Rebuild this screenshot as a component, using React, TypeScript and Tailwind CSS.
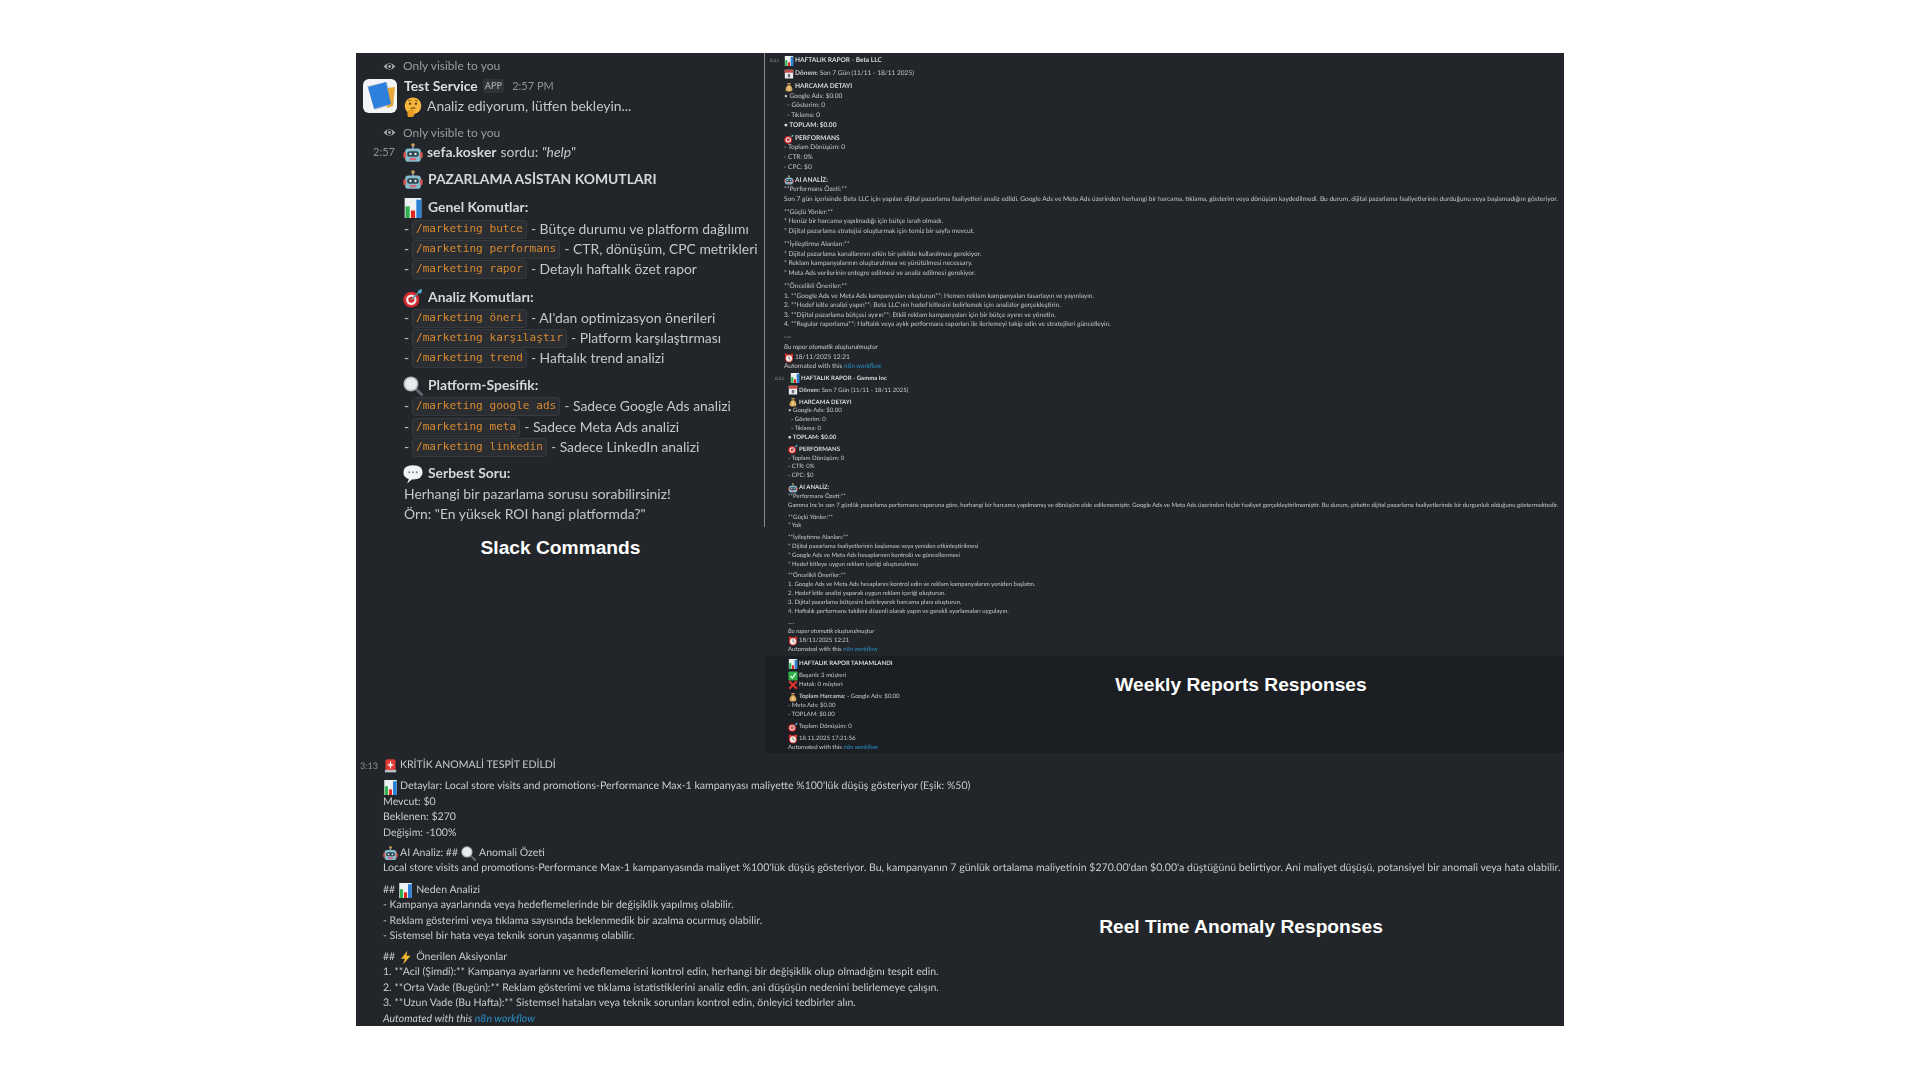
import React from "react";

type EmojiName = "chart" | "think" | "robot" | "target" | "mag" | "bubble" | "cal" | "bag" | "clock" | "check" | "cross" | "siren" | "bolt";

function Emoji({ name, className }: { name: EmojiName; className: string }) {
  const body: Record<EmojiName, React.ReactNode> = {
    chart: (
      <>
        <rect x="2" y="0" width="20" height="24" fill="#eef1f4" />
        <rect x="3" y="10" width="5" height="14" fill="#2fb24c" />
        <rect x="9.5" y="15" width="5" height="9" fill="#e0281f" />
        <rect x="16" y="2" width="6" height="22" fill="#2a7fd5" />
      </>
    ),
    think: (
      <>
        <circle cx="12" cy="10.5" r="10" fill="#f6b73c" />
        <circle cx="8.5" cy="8" r="1.4" fill="#5b3a10" />
        <circle cx="15.5" cy="8" r="1.4" fill="#5b3a10" />
        <path d="M6 4.5 L10 3.8 M14 3.6 L18 5" stroke="#8a5a14" strokeWidth="1.1" fill="none" />
        <path d="M9 14 Q12 12.5 15 13.5" stroke="#7a4d10" strokeWidth="1.3" fill="none" />
        <path d="M6 24 Q4 18 7 16 L12 15 L14 17 L11 18.5 L14 20 Q13 24 10 24 Z" fill="#e99a20" />
      </>
    ),
    robot: (
      <>
        <circle cx="12" cy="2.5" r="2.2" fill="#d9a04c" />
        <rect x="11" y="3" width="2" height="4" fill="#8b9aa5" />
        <rect x="2.5" y="6.5" width="19" height="16" rx="4" fill="#86bccb" />
        <rect x="0.5" y="11" width="3" height="7" rx="1" fill="#d9534f" />
        <rect x="20.5" y="11" width="3" height="7" rx="1" fill="#d9534f" />
        <rect x="5" y="10" width="14" height="6.5" rx="3" fill="#2f4650" />
        <circle cx="9" cy="13.2" r="1.4" fill="#e6f1f5" />
        <circle cx="15" cy="13.2" r="1.4" fill="#e6f1f5" />
        <rect x="8" y="18" width="8" height="2.6" rx="1" fill="#d9667a" />
      </>
    ),
    target: (
      <>
        <circle cx="10" cy="14" r="9.5" fill="#d32a2f" />
        <circle cx="10" cy="14" r="6.3" fill="#f3e9e6" />
        <circle cx="10" cy="14" r="3.6" fill="#d32a2f" />
        <path d="M10 14 L20 4" stroke="#5f8f9f" strokeWidth="1.8" />
        <path d="M18 3 L23 1 L22 6 L19 7 Z" fill="#4fb1c9" />
      </>
    ),
    mag: (
      <>
        <path d="M14 14 L22.5 22.5" stroke="#5f646a" strokeWidth="3.6" strokeLinecap="round" />
        <circle cx="9.5" cy="9.5" r="9" fill="#aeb5bb" />
        <circle cx="9.5" cy="9.5" r="7.2" fill="#e9ecee" />
      </>
    ),
    bubble: (
      <>
        <path d="M5 23.5 L7 18 Q0.5 16 0.5 10 Q0.5 1.5 12 1.5 Q23.5 1.5 23.5 10 Q23.5 18.5 12 18.5 L10.5 18.5 Z" fill="#f1f3f4" />
        <circle cx="7.5" cy="10" r="1.2" fill="#7c8388" />
        <circle cx="12" cy="10" r="1.2" fill="#7c8388" />
        <circle cx="16.5" cy="10" r="1.2" fill="#7c8388" />
      </>
    ),
    cal: (
      <>
        <rect x="2" y="2" width="20" height="21" rx="1" fill="#eceff1" />
        <rect x="2" y="2" width="20" height="7" fill="#c94f4a" />
        <rect x="9" y="12" width="6" height="8" fill="#6c7378" />
      </>
    ),
    bag: (
      <>
        <path d="M9 6 L7.5 2.5 L16.5 2.5 L15 6 Z" fill="#c79a55" />
        <rect x="8.5" y="6" width="7" height="2" fill="#8c6a32" />
        <path d="M9 8 Q3 13 3.5 18 Q4 23 12 23 Q20 23 20.5 18 Q21 13 15 8 Z" fill="#d8a95c" />
        <rect x="10.6" y="11.5" width="2.8" height="8" fill="#f7e3a8" />
      </>
    ),
    clock: (
      <>
        <circle cx="5" cy="4.5" r="3.5" fill="#d8322f" />
        <circle cx="19" cy="4.5" r="3.5" fill="#d8322f" />
        <circle cx="12" cy="13" r="10" fill="#d8322f" />
        <circle cx="12" cy="13" r="7.4" fill="#f4efe9" />
        <path d="M12 8 V13 L15.5 15" stroke="#33373b" strokeWidth="1.6" fill="none" />
      </>
    ),
    check: (
      <>
        <rect x="1" y="1" width="22" height="22" rx="2" fill="#2fb04a" />
        <path d="M6 12 L10.5 17 L18.5 5.5" stroke="#f4fff4" strokeWidth="3" fill="none" />
      </>
    ),
    cross: <path d="M3 3 L21 21 M21 3 L3 21" stroke="#e3342b" strokeWidth="5" />,
    siren: (
      <>
        <rect x="4" y="2" width="16" height="19" rx="3" fill="#e23b36" />
        <rect x="3" y="19" width="18" height="4" fill="#b9c0c6" />
        <path d="M12 4 L13.5 9.5 L18 11 L13.5 12.5 L12 18 L10.5 12.5 L6 11 L10.5 9.5 Z" fill="#fff" />
      </>
    ),
    bolt: <path d="M15 1 L5 14 L11 14 L8 23 L20 9 L13.5 9 Z" fill="#f5b82e" />,
  };
  return (
    <svg viewBox="0 0 24 24" className={`shrink-0 ${className}`}>
      {body[name]}
    </svg>
  );
}

function Eye() {
  return (
    <svg viewBox="0 0 24 24" className="w-[13px] h-[13px] shrink-0">
      <path d="M1 12 Q12 0 23 12 Q12 24 1 12 Z" fill="#a8aaac" />
      <circle cx="12" cy="12" r="5" fill="#222529" />
      <circle cx="12" cy="12" r="2.6" fill="#a8aaac" />
    </svg>
  );
}

function Avatar() {
  return (
    <svg viewBox="0 0 34 34" className="w-[34px] h-[34px] shrink-0">
      <rect x="0" y="0" width="34" height="34" rx="6" fill="#f3f4f5" />
      <path d="M4 7 L24 3 L31 25 L12 31 Z" fill="#c9ccd0" />
      <path d="M25 9 L32 8 L30 27 L24 29 Z" fill="#e9a93a" />
      <path d="M5 8 L23 3 L28 25 L11 30 Z" fill="#2f80dd" />
    </svg>
  );
}

function Cmd({ c, d }: { c: string; d: string }) {
  return (
    <div className="h-5 flex items-center whitespace-nowrap text-[#c6c7c8]">
      <span className="w-[8px]">-</span>
      <span className="h-[18.5px] flex items-center px-[3px] rounded-[3px] border border-[#36393d] bg-[#2a2d31] text-[#d98a30] font-['DejaVu_Sans_Mono',monospace] text-[11.1px]">
        {c}
      </span>
      <span className="ml-[4px]">- {d}</span>
    </div>
  );
}

function Head({ icon, text, className }: { icon: EmojiName; text: string; className: string }) {
  return (
    <div className={`h-5 flex items-center font-bold text-[#d6d7d8] whitespace-nowrap ${className}`}>
      <Emoji name={icon} className="w-[20px] h-[20px] -ml-[1px] mr-[5px]" />
      {text}
    </div>
  );
}

function SlackPanel() {
  return (
    <div className="h-[474px] border-r border-[#8a8c8e] pt-[3.5px] pl-[7px] text-[13.9px] text-[#c6c7c8] font-['Lato',sans-serif] blur-[0.4px] overflow-hidden">
      <div className="h-[19px] flex items-center pl-[20px] text-[12px] text-[#9a9c9e] gap-[7px]">
        <Eye />
        Only visible to you
      </div>
      <div className="flex gap-[7px] h-[41px]">
        <div className="pt-[3px]">
          <Avatar />
        </div>
        <div>
          <div className="h-[21px] flex items-center whitespace-nowrap">
            <span className="font-bold text-[#dcddde]">Test Service</span>
            <span className="ml-[5px] px-[2px] text-[9px] font-bold text-[#9a9c9e] bg-[#2f3236] rounded-[2px]">APP</span>
            <span className="ml-[8px] text-[11px] text-[#8f9193]">2:57 PM</span>
          </div>
          <div className="h-5 flex items-center">
            <Emoji name="think" className="w-[20px] h-[20px] -ml-[1px] mr-[4px]" />
            Analiz ediyorum, lütfen bekleyin...
          </div>
        </div>
      </div>
      <div className="mt-[6px] h-5 flex items-center pl-[20px] text-[12px] text-[#9a9c9e] gap-[7px]">
        <Eye />
        Only visible to you
      </div>
      <div className="h-5 flex items-center">
        <span className="w-[41px] pl-[10px] text-[11px] text-[#8f9193]">2:57</span>
        <Emoji name="robot" className="w-[20px] h-[20px] -ml-[1px] mr-[4px]" />
        <span className="font-bold text-[#d6d7d8]">sefa.kosker</span>
        <span className="ml-[4px]">sordu: <i>"help"</i></span>
      </div>
      <div className="pl-[41px]">
        <Head icon="robot" text="PAZARLAMA ASİSTAN KOMUTLARI" className="mt-[7px]" />
        <Head icon="chart" text="Genel Komutlar:" className="mt-[8px]" />
        <div className="mt-[2px]">
          <Cmd c="/marketing butce" d="Bütçe durumu ve platform dağılımı" />
          <Cmd c="/marketing performans" d="CTR, dönüşüm, CPC metrikleri" />
          <Cmd c="/marketing rapor" d="Detaylı haftalık özet rapor" />
        </div>
        <Head icon="target" text="Analiz Komutları:" className="mt-[8px]" />
        <div className="mt-[1px]">
          <Cmd c="/marketing öneri" d="AI'dan optimizasyon önerileri" />
          <Cmd c="/marketing karşılaştır" d="Platform karşılaştırması" />
          <Cmd c="/marketing trend" d="Haftalık trend analizi" />
        </div>
        <Head icon="mag" text="Platform-Spesifik:" className="mt-[7px]" />
        <div className="mt-[1px]">
          <Cmd c="/marketing google ads" d="Sadece Google Ads analizi" />
          <div className="mt-[1px]">
            <Cmd c="/marketing meta" d="Sadece Meta Ads analizi" />
          </div>
          <Cmd c="/marketing linkedin" d="Sadece LinkedIn analizi" />
        </div>
        <Head icon="bubble" text="Serbest Soru:" className="mt-[6px]" />
        <div className="mt-[1px] h-5 flex items-center whitespace-nowrap">Herhangi bir pazarlama sorusu sorabilirsiniz!</div>
        <div className="h-5 flex items-center whitespace-nowrap">Örn: "En yüksek ROI hangi platformda?"</div>
      </div>
    </div>
  );
}

function ReportLine({ icon, children, bold, h }: { icon?: EmojiName; children: React.ReactNode; bold?: boolean; h: string }) {
  return (
    <div className={`${h} flex items-center whitespace-nowrap ${bold ? "font-bold text-[#d8d9da]" : ""}`}>
      {icon ? <Emoji name={icon} className="w-[10px] h-[10px] mr-[1.5px] -ml-[0.5px]" /> : null}
      <span>{children}</span>
    </div>
  );
}

function Report({ company, variant }: { company: string; variant: "a" | "b" }) {
  const h = variant === "a" ? "h-[9.62px]" : "h-[8.87px]";
  const gap = variant === "a" ? "mt-[3.45px]" : "mt-[2.9px]";
  const L = (p: { icon?: EmojiName; children: React.ReactNode; bold?: boolean }) => <ReportLine h={h} {...p} />;
  return (
    <div className={variant === "a" ? "pt-[3.2px] pl-[5px] text-[6.55px]" : "pt-[2px] pl-[10px] text-[6.03px]"}>
      <div className="flex">
        <span className={variant === "a" ? "w-[14px] text-[4.6px] text-[#8f9193] leading-[9.55px]" : "w-[15px] text-[4.6px] text-[#8f9193] leading-[9px]"}>8:21</span>
        <L icon="chart" bold>HAFTALIK RAPOR - {company}</L>
      </div>
      <div className={variant === "a" ? "pl-[14px]" : "pl-[13px]"}>
        <div className={gap}>
          <L icon="cal"><b>Dönem:</b> Son 7 Gün (11/11 - 18/11 2025)</L>
        </div>
        <div className={gap}>
          <L icon="bag" bold>HARCAMA DETAYI</L>
          <L>• Google Ads: $0.00</L>
          <L>&nbsp;&nbsp;- Gösterim: 0</L>
          <L>&nbsp;&nbsp;- Tıklama: 0</L>
          <L bold>• TOPLAM: $0.00</L>
        </div>
        <div className={gap}>
          <L icon="target" bold>PERFORMANS</L>
          <L>- Toplam Dönüşüm: 0</L>
          <L>- CTR: 0%</L>
          <L>- CPC: $0</L>
        </div>
        <div className={gap}>
          <L icon="robot" bold>AI ANALİZ:</L>
          <L>**Performans Özeti:**</L>
          {variant === "a" ? (
            <L>Son 7 gün içerisinde Beta LLC için yapılan dijital pazarlama faaliyetleri analiz edildi. Google Ads ve Meta Ads üzerinden herhangi bir harcama, tıklama, gösterim veya dönüşüm kaydedilmedi. Bu durum, dijital pazarlama faaliyetlerinin durduğunu veya başlamadığını gösteriyor.</L>
          ) : (
            <L>Gamma Inc'in son 7 günlük pazarlama performans raporuna göre, herhangi bir harcama yapılmamış ve dönüşüm elde edilememiştir. Google Ads ve Meta Ads üzerinden hiçbir faaliyet gerçekleştirilmemiştir. Bu durum, şirketin dijital pazarlama faaliyetlerinde bir durgunluk olduğunu göstermektedir.</L>
          )}
        </div>
        {variant === "a" ? (
          <>
            <div className={gap}>
              <L>**Güçlü Yönler:**</L>
              <L>* Henüz bir harcama yapılmadığı için bütçe israfı olmadı.</L>
              <L>* Dijital pazarlama stratejisi oluşturmak için temiz bir sayfa mevcut.</L>
            </div>
            <div className={gap}>
              <L>**İyileştirme Alanları:**</L>
              <L>* Dijital pazarlama kanallarının etkin bir şekilde kullanılması gerekiyor.</L>
              <L>* Reklam kampanyalarının oluşturulması ve yürütülmesi necessary.</L>
              <L>* Meta Ads verilerinin entegre edilmesi ve analiz edilmesi gerekiyor.</L>
            </div>
            <div className={gap}>
              <L>**Öncelikli Öneriler:**</L>
              <L>1. **Google Ads ve Meta Ads kampanyaları oluşturun**: Hemen reklam kampanyaları tasarlayın ve yayınlayın.</L>
              <L>2. **Hedef kitle analizi yapın**: Beta LLC'nin hedef kitlesini belirlemek için analizler gerçekleştirin.</L>
              <L>3. **Dijital pazarlama bütçesi ayırın**: Etkili reklam kampanyaları için bir bütçe ayırın ve yönetin.</L>
              <L>4. **Regular raporlama**: Haftalık veya aylık performans raporları ile ilerlemeyi takip edin ve stratejileri güncelleyin.</L>
            </div>
          </>
        ) : (
          <>
            <div className={gap}>
              <L>**Güçlü Yönler:**</L>
              <L>* Yok</L>
            </div>
            <div className={gap}>
              <L>**İyileştirme Alanları:**</L>
              <L>* Dijital pazarlama faaliyetlerinin başlaması veya yeniden etkinleştirilmesi</L>
              <L>* Google Ads ve Meta Ads hesaplarının kontrolü ve güncellenmesi</L>
              <L>* Hedef kitleye uygun reklam içeriği oluşturulması</L>
            </div>
            <div className={gap}>
              <L>**Öncelikli Öneriler:**</L>
              <L>1. Google Ads ve Meta Ads hesaplarını kontrol edin ve reklam kampanyalarını yeniden başlatın.</L>
              <L>2. Hedef kitle analizi yaparak uygun reklam içeriği oluşturun.</L>
              <L>3. Dijital pazarlama bütçesini belirleyerek harcama planı oluşturun.</L>
              <L>4. Haftalık performans takibini düzenli olarak yapın ve gerekli ayarlamaları uygulayın.</L>
            </div>
          </>
        )}
        <div className={gap}>
          <L>---</L>
          <L><i>Bu rapor otomatik oluşturulmuştur</i></L>
          <L icon="clock">18/11/2025 12:21</L>
          <L>Automated with this <i className="text-[#2a8fc4]">n8n workflow</i></L>
        </div>
      </div>
    </div>
  );
}

function Summary() {
  const S = (p: { icon?: EmojiName; children: React.ReactNode; bold?: boolean }) => <ReportLine h="h-[9px]" {...p} />;
  return (
    <div className="w-[153px] shrink-0 pt-[3.5px] pl-[23px] text-[6.05px] text-[#c6c7c8] font-['Lato',sans-serif] blur-[0.3px] [text-rendering:geometricPrecision]">
      <S icon="chart" bold>HAFTALIK RAPOR TAMAMLANDI</S>
      <div className="mt-[3px]">
        <S icon="check">Başarılı: 3 müşteri</S>
        <S icon="cross">Hatalı: 0 müşteri</S>
      </div>
      <div className="mt-[3px]">
        <S icon="bag"><b>Toplam Harcama:</b> - Google Ads: $0.00</S>
        <S>- Meta Ads: $0.00</S>
        <S>- TOPLAM: $0.00</S>
      </div>
      <div className="mt-[3px]">
        <S icon="target">Toplam Dönüşüm: 0</S>
      </div>
      <div className="mt-[2.5px]">
        <S icon="clock">18.11.2025 17:21:56</S>
        <S>Automated with this <i className="text-[#2a8fc4]">n8n workflow</i></S>
      </div>
    </div>
  );
}

function AnomalyLine({ children, icon }: { children: React.ReactNode; icon?: EmojiName }) {
  return (
    <div className="h-[15.5px] flex items-center whitespace-nowrap">
      {icon ? <Emoji name={icon} className="w-[15px] h-[15px] mr-[2px]" /> : null}
      <span>{children}</span>
    </div>
  );
}

function Anomaly() {
  return (
    <div className="relative h-[273px] bg-[#222529]">
      <div className="pt-[5px] pl-[4px] text-[10.55px] text-[#c9cacb] font-['Lato',sans-serif] blur-[0.3px] [text-rendering:geometricPrecision]">
        <div className="flex">
          <span className="w-[23px] text-[9px] text-[#8f9193] leading-[15.5px]">3:13</span>
          <AnomalyLine icon="siren">KRİTİK ANOMALİ TESPİT EDİLDİ</AnomalyLine>
        </div>
        <div className="pl-[23px]">
          <div className="mt-[6px]">
            <AnomalyLine icon="chart">Detaylar: Local store visits and promotions-Performance Max-1 kampanyası maliyette %100'lük düşüş gösteriyor (Eşik: %50)</AnomalyLine>
            <AnomalyLine>Mevcut: $0</AnomalyLine>
            <AnomalyLine>Beklenen: $270</AnomalyLine>
            <AnomalyLine>Değişim: -100%</AnomalyLine>
          </div>
          <div className="mt-[4.5px]">
            <div className="h-[15.5px] flex items-center whitespace-nowrap">
              <Emoji name="robot" className="w-[15px] h-[15px] mr-[2px]" />
              AI Analiz: ##
              <Emoji name="mag" className="w-[15px] h-[15px] mx-[3px]" />
              Anomali Özeti
            </div>
            <AnomalyLine>Local store visits and promotions-Performance Max-1 kampanyasında maliyet %100'lük düşüş gösteriyor. Bu, kampanyanın 7 günlük ortalama maliyetinin $270.00'dan $0.00'a düştüğünü belirtiyor. Ani maliyet düşüşü, potansiyel bir anomali veya hata olabilir.</AnomalyLine>
          </div>
          <div className="mt-[6px]">
            <div className="h-[15.5px] flex items-center whitespace-nowrap">
              ##
              <Emoji name="chart" className="w-[15px] h-[15px] mx-[3px]" />
              Neden Analizi
            </div>
            <AnomalyLine>- Kampanya ayarlarında veya hedeflemelerinde bir değişiklik yapılmış olabilir.</AnomalyLine>
            <AnomalyLine>- Reklam gösterimi veya tıklama sayısında beklenmedik bir azalma ocurmuş olabilir.</AnomalyLine>
            <AnomalyLine>- Sistemsel bir hata veya teknik sorun yaşanmış olabilir.</AnomalyLine>
          </div>
          <div className="mt-[5px]">
            <div className="h-[15.5px] flex items-center whitespace-nowrap">
              ##
              <Emoji name="bolt" className="w-[15px] h-[15px] mx-[3px]" />
              Önerilen Aksiyonlar
            </div>
            <AnomalyLine>1. **Acil (Şimdi):** Kampanya ayarlarını ve hedeflemelerini kontrol edin, herhangi bir değişiklik olup olmadığını tespit edin.</AnomalyLine>
            <AnomalyLine>2. **Orta Vade (Bugün):** Reklam gösterimi ve tıklama istatistiklerini analiz edin, ani düşüşün nedenini belirlemeye çalışın.</AnomalyLine>
            <AnomalyLine>3. **Uzun Vade (Bu Hafta):** Sistemsel hataları veya teknik sorunları kontrol edin, önleyici tedbirler alın.</AnomalyLine>
            <AnomalyLine><i>Automated with this <span className="text-[#2a8fc4]">n8n workflow</span></i></AnomalyLine>
          </div>
        </div>
      </div>
      <div className="absolute left-[562px] right-0 top-[162px] text-center text-[19.2px] leading-6 font-bold text-white font-['Liberation_Sans',sans-serif]">
        Reel Time Anomaly Responses
      </div>
    </div>
  );
}

export default function App() {
  return (
    <div className="w-[1920px] h-[1080px] bg-white overflow-hidden pt-[53px] pl-[356px]">
      <div className="w-[1208px] h-[973px] bg-[#222529] flex flex-col">
        <div className="flex h-[700px]">
          <div className="w-[409px] shrink-0">
            <SlackPanel />
            <div className="pt-[9px] text-center text-[19.2px] leading-6 font-bold text-white font-['Liberation_Sans',sans-serif]">Slack Commands</div>
          </div>
          <div className="flex-1 min-w-0 flex flex-col">
            <div className="h-[603px] overflow-hidden text-[#c6c7c8] font-['Lato',sans-serif] blur-[0.3px] [text-rendering:geometricPrecision]">
              <Report company="Beta LLC" variant="a" />
              <Report company="Gamma Inc" variant="b" />
            </div>
            <div className="flex-1 flex bg-[#1b1e22]">
              <Summary />
              <div className="flex-1 pt-[17px] text-center text-[19.2px] leading-6 font-bold text-white font-['Liberation_Sans',sans-serif]">Weekly Reports Responses</div>
            </div>
          </div>
        </div>
        <Anomaly />
      </div>
    </div>
  );
}
